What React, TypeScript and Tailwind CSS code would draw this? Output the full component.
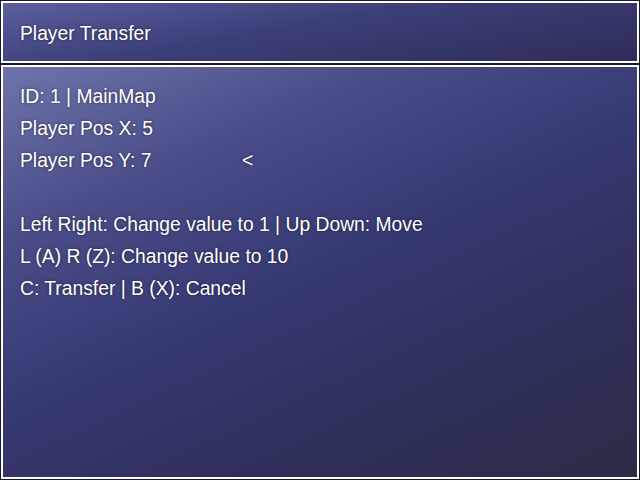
const LINES = [
  { text: "ID: 1 | MainMap" },
  { text: "Player Pos X: 5" },
  { text: "Player Pos Y: 7", cursor: true },
  { text: "" },
  { text: "Left Right: Change value to 1 | Up Down: Move" },
  { text: "L (A) R (Z): Change value to 10" },
  { text: "C: Transfer | B (X): Cancel" },
];

const textStyle =
  "text-[19.3px] leading-[32px] text-white whitespace-nowrap [text-shadow:0_0_3px_rgba(0,0,0,0.55)] font-['Liberation_Sans',Arial,sans-serif]";

export default function App() {
  return (
    <div className="flex h-[480px] w-[640px] flex-col bg-[#101020]">
      {/* Help window */}
      <div className="h-[64px] border border-[#181828]">
        <div className="h-full border-2 border-white bg-[linear-gradient(170deg,#5b5f9c_0%,#3c3e78_45%,#2c2d58_100%)]">
          <div className={`px-[17px] pt-[15px] ${textStyle}`}>Player Transfer</div>
        </div>
      </div>

      {/* Main window */}
      <div className="flex-1 border border-[#181828]">
        <div className="h-full border-2 border-white bg-[linear-gradient(155deg,#6e74ab_0%,#4a4d88_25%,#363872_50%,#2e2f5a_75%,#2c2c46_100%)]">
          <div className={`flex flex-col px-[17px] pt-[14px] ${textStyle}`}>
            {LINES.map((l, i) => (
              <div key={i} className="flex h-[32px] items-center">
                {l.cursor ? (
                  <>
                    <span className="w-[222px] shrink-0">{l.text}</span>
                    <span>&lt;</span>
                  </>
                ) : (
                  <span>{l.text}</span>
                )}
              </div>
            ))}
          </div>
        </div>
      </div>
    </div>
  );
}
